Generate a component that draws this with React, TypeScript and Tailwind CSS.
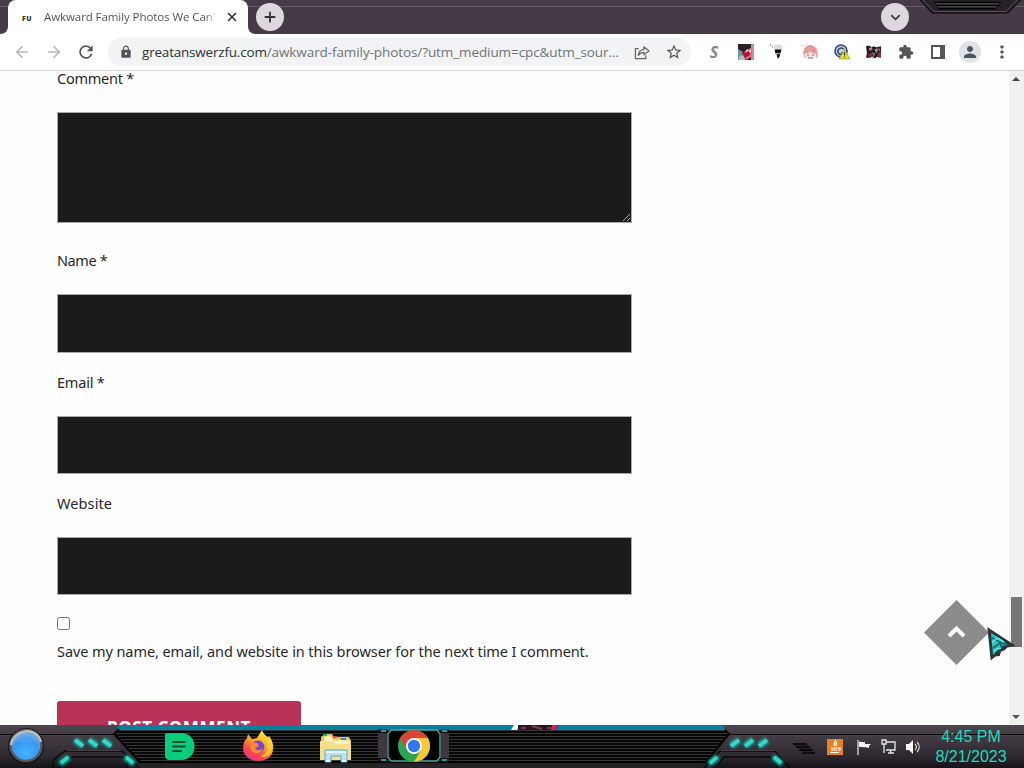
import {
  ArrowLeft,
  ArrowRight,
  ChevronDown,
  Plus,
  X,
} from 'lucide-react'
import { MdExtension, MdLock, MdMoreVert, MdPerson, MdRefresh, MdStarBorder } from 'react-icons/md'

const FIELDS = [
  { id: 'name', label: 'Name *', gap: 'mt-[25px]', height: 'h-[59px]', tracking: 'tracking-[-0.4px]' },
  { id: 'email', label: 'Email *', gap: 'mt-[17px]', height: 'h-[58px]', tracking: 'tracking-[-0.2px]' },
  { id: 'website', label: 'Website', gap: 'mt-[17px]', height: 'h-[58px]', tracking: 'tracking-[0.1px]' },
]

function TabStrip() {
  return (
    <div className="relative flex h-[34px] shrink-0 bg-[#463a47]">
      <div className="absolute inset-x-0 top-[6px] h-px bg-[#665b67]" />
      <div className="relative ml-2 flex h-full w-[240px] items-center rounded-t-lg bg-white pl-[14px]">
        <span className="mt-[5px] w-[22px] text-[7px] font-black tracking-[0.4px] text-[#333]">FU</span>
        <span className="w-[174px] text-[11.5px] tracking-[-0.08px] whitespace-nowrap text-[#555] [mask-image:linear-gradient(to_right,black_92%,transparent)]">
          Awkward Family Photos We Can'
        </span>
        <X className="ml-[7px] h-3.5 w-3.5 text-[#333]" strokeWidth={2.6} />
        <svg className="absolute bottom-0 -left-2 h-2 w-2" viewBox="0 0 8 8">
          <path d="M8 0v8H0c5 0 8-3 8-8" fill="#fff" />
        </svg>
        <svg className="absolute -right-2 bottom-0 h-2 w-2" viewBox="0 0 8 8">
          <path d="M0 0v8h8C3 8 0 5 0 0" fill="#fff" />
        </svg>
      </div>
      <button className="relative mt-[3px] ml-2 flex h-7 w-7 items-center justify-center rounded-full bg-[#ddd8de] text-[#333]">
        <Plus className="h-4 w-4" strokeWidth={2.7} />
      </button>
      <button className="relative mt-[3px] mr-[115px] ml-auto flex h-7 w-7 items-center justify-center rounded-full bg-[#ddd8de] text-[#444]">
        <ChevronDown className="h-[15px] w-[15px]" strokeWidth={3} />
      </button>
      <svg className="absolute top-0 right-0" width="106" height="16" viewBox="0 0 106 16">
        <path d="M2 0l12 13h76l13-13" fill="#252127" />
        <path d="M2 0l12 13h76l13-13" fill="none" stroke="#050505" />
        <path d="M5 0l11 11.500h72L99 0" fill="none" stroke="#69626a" strokeWidth=".8" />
        <path d="M17 2.500h66M18 5.500h64M20 8.500h58" stroke="#000" strokeWidth="1.5" />
        <path d="M18 3.800h63M20 6.800h58" stroke="#777077" strokeWidth=".7" />
      </svg>
    </div>
  )
}

function Extensions() {
  return (
    <>
      <div className="w-4 text-center text-[16px] font-bold text-[#888] italic">S</div>
      <svg width="16" height="16" viewBox="0 0 16 16">
        <path d="M0 0h16v16H0z" fill="#292129" />
        <path d="M0 5l5 3 3 8H0z" fill="#669c9f" />
        <path d="M13 0h3v16h-3z" fill="#c98f9a" />
        <path d="M6 8l8-5v9l-5 4-4-4" fill="#ef657d" />
        <path d="M4 7l4 2 3-3 1 5-5 3-3-4" fill="#a51c38" />
        <path d="M8 7l2-1M11 8l2-2" stroke="#ffe1db" strokeWidth="1.5" />
        <path d="M1 13l4-2 2 5H1" fill="#b8bec2" />
      </svg>
      <svg width="16" height="16" viewBox="0 0 16 16">
        <path d="M5 1h6l1 3-2 2H6L4 4z" fill="#ddd" stroke="#ccc" strokeWidth=".5" />
        <path d="M4.500 5.500h7l-1 4h-5z" fill="#111" />
        <path d="M6.500 10h3.500v2l-2 3-1-2z" fill="#292929" />
        <path d="M5.500 9.500h5" stroke="#aaa" />
        <path d="M0 1h1M2 3h1" stroke="#555" />
      </svg>
      <svg width="16" height="16" viewBox="0 0 16 16">
        <path d="M1 9l1-4 3-3 3-1 4 1 3 3 1 5-1 4H3z" fill="#e9a3a1" />
        <path d="M3 10l3-1 2-1 2 1 4 1v4H4z" fill="#f9e4e0" />
        <path d="M1 2l1-1M3 6l4-4 5 2 1 3M4 8l4-3 5 3" fill="none" stroke="#cb7c7e" strokeWidth=".8" />
        <path d="M5 11h2M10 11h2M6 14h5" stroke="#8d6568" />
      </svg>
      <svg width="16" height="16" viewBox="0 0 16 16">
        <circle cx="7" cy="7" r="6" fill="#c9d3e2" stroke="#304c82" strokeWidth="1.7" />
        <path d="M9.500 5A3.300 3.300 0 1 0 10 9H7" fill="none" stroke="#30466c" strokeWidth="1.6" />
        <path d="M10.500 5l5.500 10H5z" fill="#e4d833" stroke="#96912e" strokeWidth=".6" />
        <path d="M10.500 8v3.500M10.500 12.500v1" stroke="#444" strokeWidth="1.2" />
      </svg>
      <svg width="16" height="16" viewBox="0 0 17 16">
        <path d="M0 2l3-1 3 2 2-1 3 1 5-1v12l-4-1-3 2-2-2-4 1H0l1-5z" fill="#251c22" />
        <path d="M3 4l3-1 1 2-3 2zM9 6l2-2 2 2-2 3z" fill="#c98882" />
        <path d="M2 11l3-2 2 3-3 3zM12 9l4-1v5l-3 1z" fill="#83313d" />
        <path d="M6 9l3 1-2 4M13 4l2 3" stroke="#8c8f9d" strokeWidth="1.200" fill="none" />
      </svg>
      <MdExtension className="h-4 w-4 text-[#555]" />
      <svg width="16" height="16" viewBox="0 0 16 16">
        <path d="M2 2h12v12H2z" fill="none" stroke="#555" strokeWidth="2" />
        <path d="M10 2h4v12h-4z" fill="#555" />
      </svg>
    </>
  )
}

function Toolbar() {
  return (
    <div className="flex h-[37px] shrink-0 items-center border-b border-[#d4d4d6] bg-white text-[#555]">
      <ArrowLeft className="ml-[13px] h-[18px] w-[18px] text-[#b9b9b9]" strokeWidth={2.3} />
      <ArrowRight className="ml-[14px] h-[18px] w-[18px] text-[#b9b9b9]" strokeWidth={2.3} />
      <MdRefresh className="ml-[13px] h-5 w-5" />
      <div className="ml-[12px] flex h-7 w-[583px] items-center rounded-full bg-[#f1f3f4]">
        <MdLock className="ml-[11px] h-[14px] w-[14px] shrink-0" />
        <div className="ml-[9px] w-[482px] shrink-0 text-[13.5px] tracking-[-0.09px] whitespace-nowrap text-[#707376]">
          <span className="tracking-[-0.2px] text-[#303134]">greatanswerzfu.com</span>/awkward-family-photos/?utm_medium=cpc&amp;utm_sour...
        </div>
        <svg className="ml-[10px] shrink-0" width="16" height="16" viewBox="0 0 17 17" fill="none" stroke="#666" strokeWidth="1.3">
          <path d="M5 5H1.500v10.500h11V12" />
          <path d="M4.500 12c.5-4 2.500-6 6-6V3l5.500 4.500-5.500 4V9C8 9 6 10 4.500 12z" strokeLinejoin="round" />
        </svg>
        <MdStarBorder className="ml-[15px] h-[18px] w-[18px] shrink-0" />
      </div>
      <div className="ml-[15px] flex w-[240px] items-center gap-4">
        <Extensions />
      </div>
      <div className="ml-[13px] flex h-[22px] w-[22px] items-center justify-center rounded-full bg-[#dfe3e8]">
        <MdPerson className="h-[18px] w-[18px] text-[#4c5661]" />
      </div>
      <MdMoreVert className="ml-[11px] h-5 w-5" />
    </div>
  )
}

function CommentForm() {
  return (
    <form className="ml-[57px] flex w-[575px] flex-col text-[14.5px] leading-6 text-[#282828] *:shrink-0">
      <label className="h-[14px] leading-[14px] tracking-[-0.25px]" htmlFor="comment">Comment *</label>
      <div className="relative mt-[27px] h-[111px] border border-[#aaa] bg-[#1b1b1b]">
        <textarea id="comment" className="block h-full w-full resize-none bg-transparent outline-none" />
        <svg className="absolute right-0 bottom-0" width="9" height="9" viewBox="0 0 9 9">
          <path d="M1 8l7-7M5 8l3-3" stroke="#aaa" />
        </svg>
      </div>
      {FIELDS.map((field) => (
        <div key={field.id} className={`${field.gap} flex flex-col`}>
          <label className={`${field.tracking} h-6`} htmlFor={field.id}>{field.label}</label>
          <input id={field.id} className={`${field.height} mt-[22px] border border-[#aaa] bg-[#1b1b1b] outline-none`} />
        </div>
      ))}
      <input type="checkbox" id="save" className="mt-[22px] h-[13px] w-[13px]" />
      <label className="mt-[9px] h-6 tracking-[-0.08px] whitespace-nowrap" htmlFor="save">
        Save my name, email, and website in this browser for the next time I comment.
      </label>
      <button type="button" className="mt-[38px] h-[54px] w-[244px] rounded-[3px] bg-[#b93359] text-[17px] font-bold tracking-[0.6px] text-white">
        POST COMMENT
      </button>
    </form>
  )
}

function Scrollbar() {
  return (
    <div className="relative ml-auto w-[15px] shrink-0 bg-[#f0f0f0]">
      <svg className="absolute top-[5px] left-[3px]" width="9" height="6"><path d="M0 5l4-4 4 4z" fill="#444" /></svg>
      <div className="absolute top-[526px] right-[2px] h-[50px] w-[11px] bg-[#777]" />
      <svg className="absolute bottom-[5px] left-[3px]" width="9" height="6"><path d="M0 1l4 4 4-4z" fill="#555" /></svg>
    </div>
  )
}

function BackToTop() {
  return (
    <>
      <button className="absolute top-[529px] left-[924px]" aria-label="Back to top">
        <svg width="65" height="65" viewBox="0 0 65 65">
          <path d="M32.500 0L65 32.500 32.500 65 0 32.500z" fill="#8b8b8b" />
          <path d="M25 36l7.500-7.500L40 36" fill="none" stroke="#fff" strokeWidth="4" />
        </svg>
      </button>
      <svg className="absolute top-[556px] left-[987px] z-10" width="28" height="34" viewBox="0 0 28 34">
        <path d="M1.500 2l25 16.500-6.500 1-3 3-4 1.500-1 4-4 .5-3.500 3z" fill="#163c40" stroke="#353239" strokeWidth="2" />
        <path d="M4 6l10 6 7 6-7 1-3 4-5 5z" fill="#2cc3b7" />
        <path d="M5 11l6 3 9 4M6 21l7-5 2 4-7 5" fill="none" stroke="#176478" strokeWidth="1.800" />
        <path d="M5 16l5-5 7 4M7 25l3-3 4-1" fill="none" stroke="#58eee0" strokeWidth="1.500" />
      </svg>
    </>
  )
}

function TaskbarFrame() {
  return (
    <svg className="absolute inset-0" width="1024" height="43" viewBox="0 0 1024 43">
      <defs>
        <linearGradient id="metal" x2="0" y2="1">
          <stop offset="0" stopColor="#4d464e" />
          <stop offset=".3" stopColor="#413a42" />
          <stop offset=".75" stopColor="#2c282e" />
          <stop offset="1" stopColor="#151317" />
        </linearGradient>
        <pattern id="lines" width="4" height="3" patternUnits="userSpaceOnUse">
          <path d="M0 0h4v3H0z" fill="#070707" />
          <path d="M0 2.500h4" stroke="#353535" strokeWidth="1" />
        </pattern>
        <filter id="glow" x="-100%" y="-100%" width="300%" height="300%"><feGaussianBlur stdDeviation="1.8" /></filter>
      </defs>
      <path d="M0 0h1024v43H0z" fill="url(#metal)" />
      <path d="M0 9.500h118M728 9.500h296" stroke="#0b090c" />
      <path d="M0 10.500h115M731 10.500h293" stroke="#504852" strokeWidth=".6" />
      <path d="M119 0h604l6 9-23 28H140L114 9z" fill="url(#lines)" />
      <path d="M119 0h604l3 5H116z" fill="#087f9e" />
      <path d="M119 4l-5 5 26 28h566l23-28-4-4" fill="none" stroke="#000" strokeWidth="2" />
      <path d="M139 38h568l5 5H134z" fill="#242224" />
      <path d="M514 0h6l-3 5h-6z" fill="#fff" />
      <path d="M518 0h41l-4 5h-37z" fill="#271626" />
      <path d="M521 3h5M532 1l10 3M547 3h4" stroke="#764052" strokeWidth="2" />
      <path d="M552 0h6l-3 5h-4z" fill="#e21863" />
      <g fill="none" stroke="#09070a" strokeWidth="1.3">
        <path d="M53 43v-8l12-9h57l17 17M70 34l4-2h48l5 3v8M59 43l7-7" />
        <path d="M704 43l16-17h55l15 17M718 40l6-8h46l8 11" />
      </g>
      <path d="M67 25.500h54M721 25.500h54" stroke="#5a525b" strokeWidth=".7" />
      <g stroke="#00dfca" strokeWidth="6" opacity=".85" filter="url(#glow)">
        <path d="M75 15l8 6M89 15l8 6M103 15l8 6M60 39l9-7M125 32l9 7" />
        <path d="M731 21l8-6M745 21l8-6M759 21l8-6M709 39l9-7M773 32l9 7" />
      </g>
      <g stroke="#38d8c9" strokeWidth="3.500">
        <path d="M75 15l8 6M89 15l8 6M103 15l8 6M61 38l7-6M126 32l7 6" />
        <path d="M731 21l8-6M745 21l8-6M759 21l8-6M710 38l7-6M774 32l7 6" />
      </g>
      <path d="M792 18h14l8 10h-11z" fill="#262228" />
      <path d="M793 19h14M796 22h14M799 25h14M802 28h13" stroke="#050505" strokeWidth="1.300" />
    </svg>
  )
}

function StartOrb() {
  return (
    <svg width="36" height="36" viewBox="0 0 36 36">
      <defs>
        <radialGradient id="orb" cx=".5" cy=".72" r=".75">
          <stop stopColor="#43b4ff" /><stop offset=".55" stopColor="#3997ee" /><stop offset="1" stopColor="#83b1dc" />
        </radialGradient>
      </defs>
      <circle cx="18" cy="18" r="18" fill="#17161a" />
      <circle cx="18" cy="17.500" r="15.500" fill="url(#orb)" stroke="#55595e" strokeWidth="2.500" />
      <path d="M3 17C5 2 28-3 33 14" fill="none" stroke="#b9bcc0" strokeWidth="2.500" />
      <path d="M5 14C8 3 27 3 31 13c-9 2-18 0-26 1" fill="#b9d6ef" opacity=".12" />
    </svg>
  )
}

function Firefox() {
  return (
    <svg width="32" height="32" viewBox="0 0 32 32">
      <defs>
        <linearGradient id="fox" x1=".8" y1=".1" x2=".25" y2="1">
          <stop stopColor="#fff04b" /><stop offset=".45" stopColor="#ff9b27" /><stop offset=".72" stopColor="#ff4552" /><stop offset="1" stopColor="#e93589" />
        </linearGradient>
      </defs>
      <path d="M5 8l1-4 4 5 5-1 5-8c1 4 4 5 6 8l1-2c3 4 5 9 4 14-1 7-7 11-15 11S2 26 1 19c0-5 1-8 4-11" fill="url(#fox)" />
      <circle cx="16" cy="17" r="6.500" fill="#7847d1" />
      <path d="M10 12l5 1 2 3-4 2c2 3 6 3 8 0-1 5-6 7-10 4-4-3-3-7-1-10" fill="#ff8a2b" />
      <path d="M19 3c-2 4 5 6 6 11 2 7-2 11-7 13 10 1 15-8 11-17l-3-4-1 2z" fill="#ffcf33" opacity=".8" />
    </svg>
  )
}

function Folder() {
  return (
    <svg width="34" height="31" viewBox="0 0 34 31">
      <path d="M2 5l4-3h7l2 3h15l2 4v19H2z" fill="#dbc05e" />
      <path d="M5 4h7l2 4h17v18H5z" fill="#fff5c9" stroke="#ead27b" />
      <path d="M5 3h3" stroke="#25a866" strokeWidth="2" />
      <path d="M14 5h4" stroke="#df4a35" strokeWidth="2" />
      <path d="M22 7h5" stroke="#3887c8" strokeWidth="2" />
      <path d="M1 9h13l3 3h15v16H1z" fill="#f5df8b" />
      <path d="M6 18h22v12h-6v-6H12v6H6z" fill="#b5e5f5" stroke="#5eabc5" />
      <path d="M7 20h20M7 29h4M23 29h4" stroke="#e8fbff" strokeWidth="2" />
    </svg>
  )
}

function Chrome() {
  return (
    <svg width="74" height="34" viewBox="0 0 74 34">
      <path d="M1 5h9v24H1zM64 5h8v24h-8z" fill="#3d363e" />
      <path d="M1 2h9M64 2h8M1 31h9M64 31h8" stroke="#171519" strokeWidth="3" />
      <path d="M4 2h5M65 2h5M4 31h5M65 31h5" stroke="#289e98" strokeWidth="2" />
      <path d="M14 1h46l3 4v23l-3 4H14l-3-4V5z" fill="#030505" stroke="#4aa8a2" strokeWidth="1.300" />
      <circle cx="37" cy="17" r="16" fill="#2ca451" />
      <path d="M37 17L23.144 9A16 16 0 0 1 50.856 9z" fill="#db4436" />
      <path d="M37 9h13.856A16 16 0 0 1 37 33l7-12z" fill="#fcc934" />
      <path d="M23.144 9L30 21l7-12h14" fill="#db4436" />
      <circle cx="37" cy="17" r="8" fill="#fff" />
      <circle cx="37" cy="17" r="6.200" fill="#3679e8" />
    </svg>
  )
}

function Tray() {
  return (
    <div className="mt-[13px] ml-[376px] flex h-[18px] w-[94px] shrink-0 items-center">
      <svg width="16" height="16" viewBox="0 0 16 16">
        <path d="M0 0h16v16H0z" fill="#e58224" />
        <path d="M8 1c2 2-3 3 0 6M10 3c-2 2 0 2-1 4M4 9h7c3-1 3 2 0 2M4 11h6M3 13.500h9" fill="none" stroke="#fff" strokeWidth="1.200" />
      </svg>
      <svg className="ml-[13px]" width="16" height="16" viewBox="0 0 16 16">
        <path d="M2 1v15" stroke="#ddd" strokeWidth="1.300" />
        <path d="M3 3c2-1 4 1 6 0v2h6l-2 2 0 2-4-1c-2 1-4-1-6 0z" fill="#fff" />
      </svg>
      <svg className="ml-[8px]" width="16" height="16" viewBox="0 0 16 16" fill="none" stroke="#e8e8e8" strokeWidth="1.300">
        <path d="M6 3h9v8H6M8 14h6M10.500 11v3M2 1h4v4H2zM4 5v9" />
      </svg>
      <svg className="ml-[9px]" width="16" height="16" viewBox="0 0 16 16">
        <path d="M1 5h3l4-4v14l-4-4H1z" fill="#fff" />
        <path d="M10 5c2 2 2 4 0 6M12 3c3 3 3 7 0 10" fill="none" stroke="#ddd" strokeWidth="1.100" />
      </svg>
    </div>
  )
}

function Taskbar() {
  return (
    <div className="relative h-[43px] shrink-0 overflow-hidden bg-[#28242a]">
      <TaskbarFrame />
      <div className="relative flex h-full items-start">
        <div className="mt-[3px] ml-2"><StartOrb /></div>
        <svg className="mt-2 ml-[121px]" width="30" height="27" viewBox="0 0 30 27">
          <path d="M0 2q0-2 2-2h14c18 0 18 27 0 27H5q-5 0-5-5z" fill="#08ce79" />
          <path d="M8 9h12M8 13.500h12M8 18h8" stroke="#174d36" strokeWidth="2" strokeLinecap="round" />
        </svg>
        <div className="mt-[5px] ml-[47px]"><Firefox /></div>
        <div className="mt-[7px] ml-[45px]"><Folder /></div>
        <div className="mt-1 ml-[24px]"><Chrome /></div>
        <Tray />
        <div className="ml-[8px] w-[84px] pt-[2px] text-center font-['Liberation_Sans'] text-[16px] leading-5 whitespace-nowrap text-[#26d8be]">
          <div>4:45 PM</div>
          <div>8/21/2023</div>
        </div>
      </div>
    </div>
  )
}

export default function App() {
  return (
    <div className="flex h-[768px] w-[1024px] flex-col overflow-hidden bg-[#fefefe] font-['Open_Sans','Noto_Sans',sans-serif]">
      <TabStrip />
      <Toolbar />
      <main className="relative flex min-h-0 flex-1 overflow-hidden font-['Noto_Sans',sans-serif]">
        <CommentForm />
        <Scrollbar />
        <BackToTop />
      </main>
      <Taskbar />
    </div>
  )
}
